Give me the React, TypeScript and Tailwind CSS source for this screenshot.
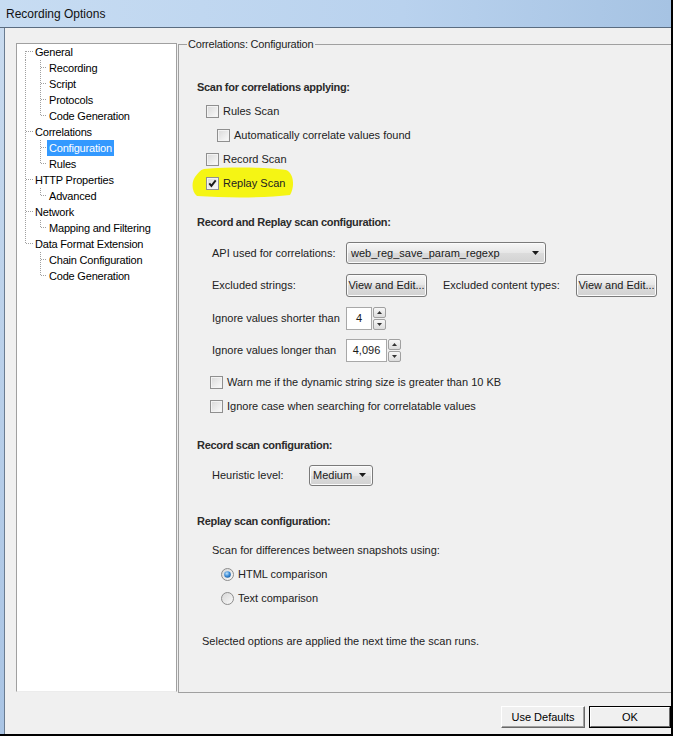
import React from 'react';

const FONT = "font-['Liberation_Sans',Arial,sans-serif]";

function Checkbox({ checked = false }: { checked?: boolean }) {
  return (
    <span className="flex items-center justify-center w-[13px] h-[13px] shrink-0 border border-[#8f8f8f] bg-gradient-to-br from-[#d9d9d9] to-[#fbfbfb] shadow-[inset_0_0_0_1px_#f3f3f3]">
      {checked && (
        <svg width="11" height="11" viewBox="0 0 11 11">
          <path d="M2.3 5.4 L4.4 7.9 L8.7 2.4" fill="none" stroke="#1c1c1c" strokeWidth="1.9" />
        </svg>
      )}
    </span>
  );
}

function Radio({ checked = false }: { checked?: boolean }) {
  return (
    <svg width="13" height="13" viewBox="0 0 13 13" className="shrink-0">
      <defs>
        <linearGradient id="radioBg" x1="0" y1="0" x2="1" y2="1">
          <stop offset="0" stopColor="#d5d5d5" />
          <stop offset="1" stopColor="#fbfbfb" />
        </linearGradient>
        <radialGradient id="radioDot" cx="0.4" cy="0.35" r="0.75">
          <stop offset="0" stopColor="#bfe3fb" />
          <stop offset="0.55" stopColor="#3a8ad6" />
          <stop offset="1" stopColor="#195593" />
        </radialGradient>
      </defs>
      <circle cx="6.5" cy="6.5" r="6" fill="url(#radioBg)" stroke="#8c8c8c" />
      {checked && <circle cx="6.5" cy="6.5" r="3.3" fill="url(#radioDot)" />}
    </svg>
  );
}

function Arrow() {
  return (
    <svg width="7" height="4" viewBox="0 0 7 4" className="shrink-0">
      <path d="M0 0 H7 L3.5 4 Z" fill="#1a1a1a" />
    </svg>
  );
}

function SpinArrow({ up }: { up: boolean }) {
  return (
    <svg width="5" height="3" viewBox="0 0 5 3">
      <path d={up ? 'M0 3 H5 L2.5 0 Z' : 'M0 0 H5 L2.5 3 Z'} fill="#333" />
    </svg>
  );
}

const win7 =
  'rounded-[3px] border border-[#7a7a7a] bg-[linear-gradient(#f6f6f6,#e6e6e6_50%,#dcdcdc_50%,#d2d2d2)] shadow-[inset_0_0_0_1px_#fbfbfb]';

function Spinner({ value, width }: { value: string; width: string }) {
  return (
    <div className="flex h-[23px] items-stretch">
      <div className={`${width} flex items-center justify-center border border-[#a8a8a8] bg-white text-[#1a1a1a]`}>{value}</div>
      <div className="flex flex-col w-[13px] ml-[1px] gap-[1px]">
        <div className="flex-1 flex items-center justify-center rounded-[2px] border border-[#a0a0a0] bg-[linear-gradient(#f7f7f7,#dcdcdc)]">
          <SpinArrow up />
        </div>
        <div className="flex-1 flex items-center justify-center rounded-[2px] border border-[#a0a0a0] bg-[linear-gradient(#f7f7f7,#dcdcdc)]">
          <SpinArrow up={false} />
        </div>
      </div>
    </div>
  );
}

const treeData = [
  { label: 'General', children: ['Recording', 'Script', 'Protocols', 'Code Generation'] },
  { label: 'Correlations', children: ['Configuration', 'Rules'] },
  { label: 'HTTP Properties', children: ['Advanced'] },
  { label: 'Network', children: ['Mapping and Filtering'] },
  { label: 'Data Format Extension', children: ['Chain Configuration', 'Code Generation'] },
];

function Dots({ x1, y1, x2, y2 }: { x1: number; y1: number; x2: number; y2: number }) {
  return <line x1={x1} y1={y1} x2={x2} y2={y2} stroke="#a0a0a0" strokeWidth="1" strokeDasharray="1 1" shapeRendering="crispEdges" />;
}

function Tree() {
  const rows: React.ReactNode[] = [];
  treeData.forEach((node, i) => {
    const first = i === 0;
    const last = i === treeData.length - 1;
    rows.push(
      <div key={node.label} className="flex h-[16px] items-center">
        <svg width="16" height="16" className="shrink-0">
          <Dots x1={8.5} y1={first ? 7 : 0} x2={8.5} y2={last ? 8 : 16} />
          <Dots x1={9} y1={7.5} x2={16} y2={7.5} />
        </svg>
        <span className="px-[2px] leading-[16px] h-[16px] whitespace-nowrap">{node.label}</span>
      </div>
    );
    node.children.forEach((c, j) => {
      const lastChild = j === node.children.length - 1;
      const selected = node.label === 'Correlations' && c === 'Configuration';
      rows.push(
        <div key={node.label + c} className="flex h-[16px] items-center">
          <svg width="30" height="16" className="shrink-0">
            {!last && <Dots x1={8.5} y1={0} x2={8.5} y2={16} />}
            <Dots x1={23.5} y1={0} x2={23.5} y2={lastChild ? 8 : 16} />
            <Dots x1={24} y1={7.5} x2={30} y2={7.5} />
          </svg>
          <span
            className={`px-[2px] leading-[16px] h-[16px] whitespace-nowrap ${selected ? 'bg-[#3399ff] text-white' : ''}`}
          >
            {c}
          </span>
        </div>
      );
    });
  });
  return <div className="flex flex-col">{rows}</div>;
}

function CheckRow({ label, checked, className = '' }: { label: string; checked?: boolean; className?: string }) {
  return (
    <div className={`flex items-center h-[24px] gap-[4px] ${className}`}>
      <Checkbox checked={checked} />
      <span className="whitespace-nowrap">{label}</span>
    </div>
  );
}

function Heading({ children, className = '' }: { children: React.ReactNode; className?: string }) {
  return (
    <div className={`h-[16px] leading-[16px] font-bold text-[#2b2b2b] tracking-[-0.3px] whitespace-nowrap ${className}`}>{children}</div>
  );
}

export default function App() {
  return (
    <div className={`w-[673px] h-[736px] bg-black overflow-hidden ${FONT}`}>
      <div className="w-[671px] h-[734px] flex flex-col">
        {/* Title bar */}
        <div className="h-[28px] shrink-0 flex items-center pl-[6px] border-b border-[#5a6c80] bg-[linear-gradient(90deg,#c7dcf2,#b9d2ee_60%,#a6c3e3)] text-[12px] text-[#111]">
          Recording Options
        </div>
        <div className="flex flex-1 min-h-0">
          {/* left frame */}
          <div className="w-[5px] shrink-0 border-r border-[#6a7c91] bg-[linear-gradient(#c9dbef,#a9c4e4)]" />
          {/* client */}
          <div className="flex-1 min-w-0 bg-[#f0f0f0] flex flex-col pt-[15px] pl-[11px] overflow-hidden">
            <div className="flex h-[650px] shrink-0">
              {/* tree */}
              <div className="w-[161px] h-[649px] shrink-0 bg-white border-l border-t border-r border-[#a0a0a0] border-b-[#ececec] border-b text-[11px] text-black tracking-[-0.2px]">
                <Tree />
              </div>
              {/* right group */}
              <div className="relative flex-1 min-w-0 h-[649px] mt-[1px] ml-[1px] border-l border-t border-b border-[#a0a0a0]">
                <div className="absolute left-[8px] top-[-8px] h-[14px] leading-[14px] bg-[#f0f0f0] pl-[1px] pr-[2px] text-[11px] tracking-[-0.2px] text-[#1e1e1e] whitespace-nowrap">
                  Correlations: Configuration
                </div>
                <div className="flex flex-col pl-[18px] pt-[34px] text-[11px] text-[#222]">
                  <Heading>Scan for correlations applying:</Heading>
                  <CheckRow className="mt-[4px] ml-[9px]" label="Rules Scan" />
                  <CheckRow className="ml-[20px]" label="Automatically correlate values found" />
                  <CheckRow className="ml-[9px]" label="Record Scan" />
                  <div className="relative">
                    <svg width="104" height="31" viewBox="0 0 104 31" className="absolute left-[-6px] top-[-4px]">
                      <path
                        d="M13 2 C40 0 75 0 95 3 C103 6 104 20 99 28 C75 31 35 31 6 29 C1 25 0 16 4 10 C7 6 9 3 13 2 Z"
                        fill="#f5f514"
                      />
                    </svg>
                    <CheckRow className="relative ml-[9px]" checked label="Replay Scan" />
                  </div>

                  <Heading className="mt-[19px]">Record and Replay scan configuration:</Heading>
                  <div className="flex items-center h-[24px] mt-[11px] ml-[15px]">
                    <span className="w-[134px] shrink-0">API used for correlations:</span>
                    <div className={`w-[200px] h-[22px] flex items-center justify-between pl-[4px] pr-[6px] text-[#1a1a1a] ${win7}`}>
                      <span>web_reg_save_param_regexp</span>
                      <Arrow />
                    </div>
                  </div>
                  <div className="flex items-center h-[24px] mt-[8px] ml-[15px]">
                    <span className="w-[134px] shrink-0">Excluded strings:</span>
                    <div className={`w-[81px] h-[23px] flex items-center justify-center text-[#1a1a1a] ${win7}`}>View and Edit...</div>
                    <span className="w-[133px] shrink-0 ml-[16px]">Excluded content types:</span>
                    <div className={`w-[81px] h-[23px] flex items-center justify-center text-[#1a1a1a] ${win7}`}>View and Edit...</div>
                  </div>
                  <div className="flex items-center h-[24px] mt-[9px] ml-[15px]">
                    <span className="w-[134px] shrink-0">Ignore values shorter than</span>
                    <Spinner value="4" width="w-[26px]" />
                  </div>
                  <div className="flex items-center h-[24px] mt-[8px] ml-[15px]">
                    <span className="w-[134px] shrink-0">Ignore values longer than</span>
                    <Spinner value="4,096" width="w-[41px]" />
                  </div>
                  <CheckRow className="mt-[8px] ml-[13px]" label="Warn me if the dynamic string size is greater than 10 KB" />
                  <CheckRow className="ml-[13px]" label="Ignore case when searching for correlatable values" />

                  <Heading className="mt-[19px]">Record scan configuration:</Heading>
                  <div className="flex items-center h-[24px] mt-[10px] ml-[15px]">
                    <span className="w-[97px] shrink-0">Heuristic level:</span>
                    <div className={`w-[64px] h-[21px] flex items-center justify-between pl-[3px] pr-[6px] text-[#1a1a1a] ${win7}`}>
                      <span>Medium</span>
                      <Arrow />
                    </div>
                  </div>

                  <Heading className="mt-[26px]">Replay scan configuration:</Heading>
                  <div className="h-[16px] leading-[16px] mt-[13px] ml-[15px]">Scan for differences between snapshots using:</div>
                  <div className="flex items-center h-[24px] gap-[4px] mt-[4px] ml-[24px]">
                    <Radio checked />
                    <span>HTML comparison</span>
                  </div>
                  <div className="flex items-center h-[24px] gap-[4px] ml-[24px]">
                    <Radio />
                    <span>Text comparison</span>
                  </div>
                  <div className="h-[16px] leading-[16px] mt-[23px] ml-[5px]">Selected options are applied the next time the scan runs.</div>
                </div>
              </div>
            </div>
            {/* buttons */}
            <div className="flex justify-end gap-[4px] mt-[13px] h-[22px] text-[11px] text-black">
              <div className="w-[84px] h-[22px] flex items-center justify-center bg-[#f0f0f0] border border-t-white border-l-white border-r-[#696969] border-b-[#696969] shadow-[inset_-1px_-1px_0_#a0a0a0]">
                Use Defaults
              </div>
              <div className="w-[82px] h-[22px] border border-black">
                <div className="w-full h-full flex items-center justify-center bg-[#f0f0f0] border border-t-white border-l-white border-r-[#696969] border-b-[#696969]">
                  OK
                </div>
              </div>
            </div>
          </div>
        </div>
      </div>
    </div>
  );
}
